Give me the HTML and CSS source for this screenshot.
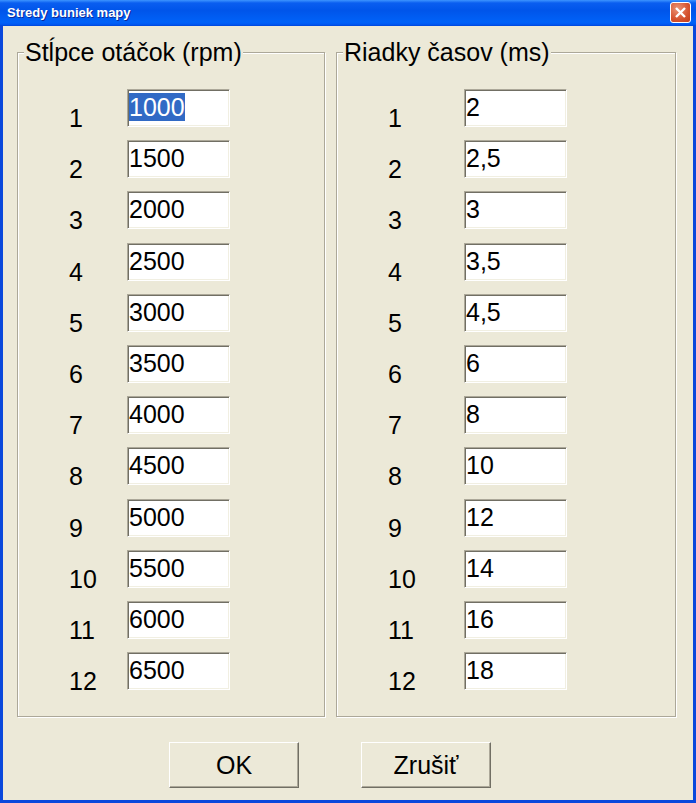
FILE: index.html
```html
<!DOCTYPE html>
<html lang="sk">
<head>
    <meta charset="UTF-8">
    <title>Stredy buniek mapy</title>
    <link rel="stylesheet" href="styles.css">
</head>
<body>
    <div class="window">
        <div class="titlebar">
            <span class="title">Stredy buniek mapy</span>
            <button class="close" title="Zavrieť">
                <svg width="19" height="19" viewBox="0 0 19 19">
                    <path d="M5 5L14 14M14 5L5 14" stroke="#fff" stroke-width="2.4" fill="none"/>
                </svg>
            </button>
        </div>

        <div class="client">
            <div class="groups">
                <fieldset class="group group-rpm">
                    <legend>Stĺpce otáčok (rpm)</legend>
                    <div class="rows">
                        <div class="row"><span class="num">1</span><div class="field"><span class="selected">1000</span></div></div>
                        <div class="row"><span class="num">2</span><div class="field">1500</div></div>
                        <div class="row"><span class="num">3</span><div class="field">2000</div></div>
                        <div class="row"><span class="num">4</span><div class="field">2500</div></div>
                        <div class="row"><span class="num">5</span><div class="field">3000</div></div>
                        <div class="row"><span class="num">6</span><div class="field">3500</div></div>
                        <div class="row"><span class="num">7</span><div class="field">4000</div></div>
                        <div class="row"><span class="num">8</span><div class="field">4500</div></div>
                        <div class="row"><span class="num">9</span><div class="field">5000</div></div>
                        <div class="row"><span class="num">10</span><div class="field">5500</div></div>
                        <div class="row"><span class="num">11</span><div class="field">6000</div></div>
                        <div class="row"><span class="num">12</span><div class="field">6500</div></div>
                    </div>
                </fieldset>

                <fieldset class="group group-ms">
                    <legend>Riadky časov (ms)</legend>
                    <div class="rows">
                        <div class="row"><span class="num">1</span><div class="field">2</div></div>
                        <div class="row"><span class="num">2</span><div class="field">2,5</div></div>
                        <div class="row"><span class="num">3</span><div class="field">3</div></div>
                        <div class="row"><span class="num">4</span><div class="field">3,5</div></div>
                        <div class="row"><span class="num">5</span><div class="field">4,5</div></div>
                        <div class="row"><span class="num">6</span><div class="field">6</div></div>
                        <div class="row"><span class="num">7</span><div class="field">8</div></div>
                        <div class="row"><span class="num">8</span><div class="field">10</div></div>
                        <div class="row"><span class="num">9</span><div class="field">12</div></div>
                        <div class="row"><span class="num">10</span><div class="field">14</div></div>
                        <div class="row"><span class="num">11</span><div class="field">16</div></div>
                        <div class="row"><span class="num">12</span><div class="field">18</div></div>
                    </div>
                </fieldset>
            </div>

            <div class="actions">
                <button class="btn">OK</button>
                <button class="btn">Zrušiť</button>
            </div>
        </div>
    </div>
</body>
</html>
```
FILE: styles.css
```css
* { box-sizing: border-box; }
body { margin: 0; font-family: "Liberation Sans", Arial, sans-serif; }

.window { width: 696px; height: 803px; display: flex; flex-direction: column; background: #0a48dc; }

.titlebar { height: 26px; flex: none; display: flex; align-items: center; justify-content: space-between; padding: 0 5px 1px 7px;
    background: linear-gradient(#3d95ff 0, #0a5ef0 3px, #0055ea 40%, #0062f8 85%, #005af4 93%, #0046da 100%); }
.title { color: #fff; font-weight: bold; font-size: 13px; text-shadow: 1px 1px 0 #0b2a9a; }
.close { width: 21px; height: 21px; padding: 0; border: 1px solid #fff; border-radius: 3px; display: flex;
    background: radial-gradient(circle at 35% 30%, #eb9477, #d5532f 60%, #c13d1c); }

.client { flex: 1; margin: 0 3px 3px; background: #ece9d8; padding: 12px 0 0 14px; }

.groups { display: flex; gap: 11px; }
.group { margin: 0; height: 679px; padding: 22px 0 0 0; border: 1px solid #aca899;
    box-shadow: 1px 1px 0 #fff, inset 1px 1px 0 #fff; }
.group-rpm { width: 308px; --label-w: 58px; }
.group-ms { width: 340px; --label-w: 76px; }
.group legend { margin-left: 6px; padding: 0 1px; font-size: 25px; background: #ece9d8; }

.rows { display: grid; grid-auto-rows: 51.2px; padding-left: 51px; }
.row { display: flex; align-items: flex-start; }
.num { width: var(--label-w); padding-top: 17px; font-size: 25px; line-height: 25px; }
.field { width: 103px; height: 38px; padding: 3px 0 0 1px; font-size: 25px; line-height: 28px; background: #fff;
    border: 1px solid; border-color: #aca899 #fff #fff #aca899;
    box-shadow: inset 1px 1px 0 #716f64, inset -1px -1px 0 #f1efe2; }
.selected { background: #316ac5; color: #fff; }

.actions { display: flex; gap: 62px; margin: 25px 0 0 152px; }
.btn { width: 130px; height: 46px; padding: 0; font: inherit; font-size: 25px; color: #000; background: #ece9d8;
    border: 1px solid; border-color: #fff #716f64 #716f64 #fff; box-shadow: inset -1px -1px 0 #aca899; }
```
